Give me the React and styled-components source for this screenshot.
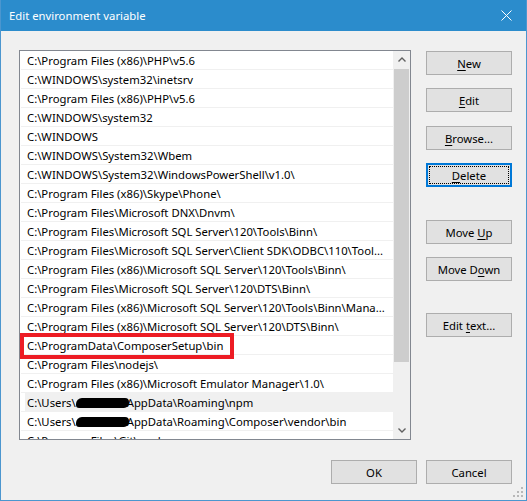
import React from "react";
import styled, { createGlobalStyle } from "styled-components";

const GlobalStyle = createGlobalStyle`
  html, body {
    margin: 0;
    padding: 0;
    background: #f0f0f0;
  }
  body {
    font-family: "Noto Sans", "Liberation Sans", sans-serif;
  }
`;

const Window = styled.div`
  position: relative;
  width: 527px;
  height: 501px;
  box-sizing: border-box;
  border: 1px solid #4b96cf;
  border-top: none;
  background: #f0f0f0;
  display: flex;
  flex-direction: column;
  font-family: "Noto Sans", "Liberation Sans", sans-serif;
  font-size: 11.3px;
  color: #000;
  overflow: hidden;
`;

const TitleBar = styled.div`
  height: 31px;
  flex: none;
  background: #2b8ccc;
  margin: 0 -1px;
  padding: 0 15px 0 9px;
  display: flex;
  align-items: center;
  justify-content: space-between;
  color: #fff;
`;

const Title = styled.span`
  font-size: 11.3px;
`;

const Body = styled.div`
  flex: 1;
  padding: 19px 14px 0 18px;
  display: flex;
  flex-direction: column;
`;

const Main = styled.div`
  display: flex;
  gap: 15px;
`;

const ListBox = styled.div`
  width: 392px;
  height: 390px;
  box-sizing: border-box;
  border: 1px solid #828790;
  background: #fff;
  display: flex;
`;

const Rows = styled.div`
  flex: 1;
  overflow: hidden;
  padding-left: 1px;
`;

const Row = styled.div`
  position: relative;
  height: 19px;
  box-sizing: border-box;
  border-bottom: 1px solid #f0f0f0;
  padding-left: 4px;
  display: flex;
`;

const Cell = styled.div`
  flex: 1;
  min-width: 0;
  padding-left: 2px;
  line-height: 19px;
  white-space: nowrap;
  overflow: hidden;
  text-overflow: ellipsis;
  background: ${(p) => (p.$hover ? "#f0f0f0" : "transparent")};
`;

const Scribble = styled.span`
  display: inline-block;
  width: 53px;
  height: 10px;
  margin-right: -2px;
  vertical-align: -1px;
  background: #000;
  border-radius: 6px 4px 5px 3px;
`;

const Marker = styled.div`
  position: absolute;
  left: -1px;
  top: -3px;
  width: 214px;
  height: 26px;
  box-sizing: border-box;
  border: 4px solid #ed1c24;
  pointer-events: none;
`;

const ScrollBar = styled.div`
  width: 17px;
  flex: none;
  background: #f0f0f0;
  display: flex;
  flex-direction: column;
`;

const Arrow = styled.div`
  height: 17px;
  display: flex;
  align-items: center;
  justify-content: center;
`;

const Thumb = styled.div`
  margin: 1px 1px 0 1px;
  height: 293px;
  background: #cdcdcd;
`;

const Track = styled.div`
  flex: 1;
`;

const Column = styled.div`
  width: 86px;
  padding-top: 1px;
  display: flex;
  flex-direction: column;
`;

const Button = styled.button`
  position: relative;
  width: 86px;
  height: 24px;
  margin-top: ${(p) => p.$mt || 0}px;
  box-sizing: border-box;
  padding: 0;
  border: 1px solid #adadad;
  background: #e1e1e1;
  font-family: inherit;
  font-size: 11.3px;
  color: #000;
  box-shadow: ${(p) => (p.$focus ? "inset 0 0 0 1px #0078d7" : "none")};
  border-color: ${(p) => (p.$focus ? "#0078d7" : "#adadad")};

  &::after {
    content: "";
    display: ${(p) => (p.$focus ? "block" : "none")};
    position: absolute;
    inset: 2px;
    border: 1px dotted #000;
  }
`;

const Key = styled.u`
  text-decoration: underline;
  text-underline-offset: 2px;
`;

const Footer = styled.div`
  margin-top: 20px;
  display: flex;
  justify-content: flex-end;
  gap: 9px;
`;

const Grip = styled.svg`
  position: absolute;
  right: 2px;
  bottom: 2px;
`;

const paths = [
  "C:\\Program Files (x86)\\PHP\\v5.6",
  "C:\\WINDOWS\\system32\\inetsrv",
  "C:\\Program Files (x86)\\PHP\\v5.6",
  "C:\\WINDOWS\\system32",
  "C:\\WINDOWS",
  "C:\\WINDOWS\\System32\\Wbem",
  "C:\\WINDOWS\\System32\\WindowsPowerShell\\v1.0\\",
  "C:\\Program Files (x86)\\Skype\\Phone\\",
  "C:\\Program Files\\Microsoft DNX\\Dnvm\\",
  "C:\\Program Files\\Microsoft SQL Server\\120\\Tools\\Binn\\",
  "C:\\Program Files\\Microsoft SQL Server\\Client SDK\\ODBC\\110\\Tool...",
  "C:\\Program Files (x86)\\Microsoft SQL Server\\120\\Tools\\Binn\\",
  "C:\\Program Files\\Microsoft SQL Server\\120\\DTS\\Binn\\",
  "C:\\Program Files (x86)\\Microsoft SQL Server\\120\\Tools\\Binn\\Mana...",
  "C:\\Program Files (x86)\\Microsoft SQL Server\\120\\DTS\\Binn\\",
  "C:\\ProgramData\\ComposerSetup\\bin",
  "C:\\Program Files\\nodejs\\",
  "C:\\Program Files (x86)\\Microsoft Emulator Manager\\1.0\\",
  { user: "AppData\\Roaming\\npm", hover: true },
  { user: "AppData\\Roaming\\Composer\\vendor\\bin" },
  "C:\\Program Files\\Git\\cmd",
];

const Chevron = ({ up }) => (
  <svg width="8" height="5" viewBox="0 0 8 5">
    <polyline
      points={up ? "0.5,4.5 4,1 7.5,4.5" : "0.5,0.5 4,4 7.5,0.5"}
      fill="none"
      stroke="#606060"
      strokeWidth="1.4"
    />
  </svg>
);

const App = () => {
  return (
    <>
      <GlobalStyle />
      <Window>
        <TitleBar>
          <Title>Edit environment variable</Title>
          <svg width="11" height="11" viewBox="0 0 11 11">
            <path d="M0.5 0.5 L10.5 10.5 M10.5 0.5 L0.5 10.5" stroke="#fff" strokeWidth="1" />
          </svg>
        </TitleBar>
        <Body>
          <Main>
            <ListBox>
              <Rows>
                {paths.map((p, i) => (
                  <Row key={i}>
                    {typeof p === "string" ? (
                      <Cell>{p}</Cell>
                    ) : (
                      <Cell $hover={p.hover}>
                        C:\Users\<Scribble />
                        {p.user}
                      </Cell>
                    )}
                    {i === 15 && <Marker />}
                  </Row>
                ))}
              </Rows>
              <ScrollBar>
                <Arrow>
                  <Chevron up />
                </Arrow>
                <Thumb />
                <Track />
                <Arrow>
                  <Chevron />
                </Arrow>
              </ScrollBar>
            </ListBox>
            <Column>
              <Button>
                <Key>N</Key>ew
              </Button>
              <Button $mt={13}>
                <Key>E</Key>dit
              </Button>
              <Button $mt={14}>
                <Key>B</Key>rowse...
              </Button>
              <Button $mt={13} $focus>
                <Key>D</Key>elete
              </Button>
              <Button $mt={33}>
                Move <Key>U</Key>p
              </Button>
              <Button $mt={13}>
                Move D<Key>o</Key>wn
              </Button>
              <Button $mt={32}>
                Edit <Key>t</Key>ext...
              </Button>
            </Column>
          </Main>
          <Footer>
            <Button>OK</Button>
            <Button>Cancel</Button>
          </Footer>
        </Body>
        <Grip width="11" height="11" viewBox="0 0 11 11">
          {[
            [8, 0],
            [8, 4],
            [4, 4],
            [8, 8],
            [4, 8],
            [0, 8],
          ].map(([x, y], i) => (
            <rect key={i} x={x} y={y} width="2" height="2" fill="#b8b8b8" />
          ))}
        </Grip>
      </Window>
    </>
  );
};

export default App;
